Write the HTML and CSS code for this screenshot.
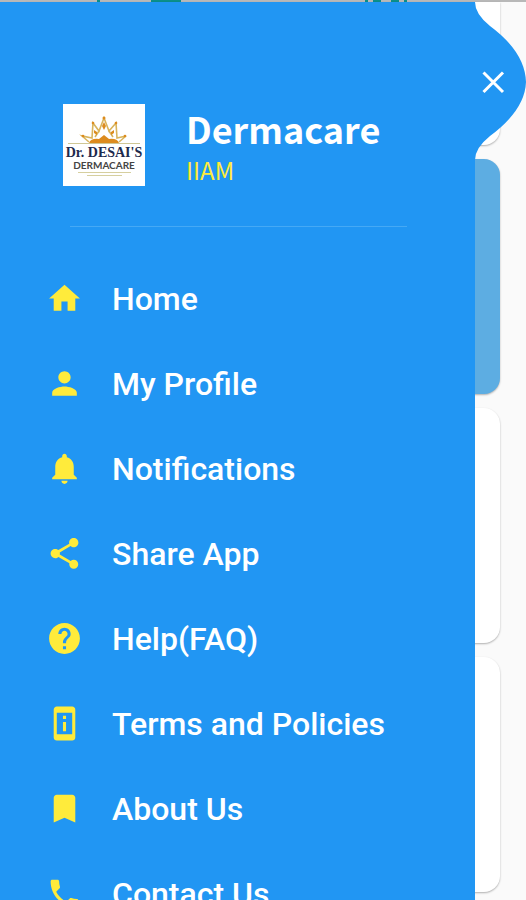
FILE: index.html
```
<!DOCTYPE html>
<html lang="en">
<head>
    <meta charset="UTF-8">
    <meta name="viewport" content="width=device-width, initial-scale=1.0">
    <title>Dermacare</title>
    <link rel="stylesheet" href="styles.css">
</head>
<body>
    <div class="topbar"></div>

    <main class="cards">
        <div class="card card-first"></div>
        <div class="card card-blue"></div>
        <div class="card"></div>
        <div class="card"></div>
    </main>

    <aside class="drawer">
        <div class="panel">
            <header class="profile">
                <svg class="logo" viewBox="0 0 82 82" role="img" aria-label="Dr. Desai's Dermacare">
                    <rect width="82" height="82" fill="#fff"/>
                    <g fill="none" stroke="#d9b45c" stroke-width="1.6">
                        <path d="M26 38 L19 32 L29 34 L30 19 L36 27 L41 14 L46 27 L53 19 L54 34 L63 32 L56 38"/>
                        <path d="M36 27 L32 33 M46 27 L50 33"/>
                    </g>
                    <path d="M26 39 Q28 34 36 35 L41 31 L46 35 Q54 34 56 39 Z" fill="#dc8b1e"/>
                    <g fill="#dc8b1e">
                        <path d="M41 18 L43 22 L41 26 L39 22 Z"/>
                        <path d="M31 26 L34 28 L34 31 L31 29 Z"/>
                        <path d="M51 26 L48 28 L48 31 L51 29 Z"/>
                        <circle cx="41" cy="14" r="1.5"/>
                        <circle cx="30" cy="19" r="1.3"/>
                        <circle cx="53" cy="19" r="1.3"/>
                        <circle cx="20" cy="32" r="1.3"/>
                        <circle cx="62" cy="32" r="1.3"/>
                    </g>
                    <path d="M5 39.5H77" stroke="#cfc795" stroke-width="1"/>
                    <text class="logo-name" x="41" y="53" text-anchor="middle">Dr. DESAI'S</text>
                    <text class="logo-sub" x="41" y="65" text-anchor="middle">DERMACARE</text>
                    <path d="M15 68.5H68M24 71.5H59" stroke="#d6cf9f" stroke-width="1"/>
                </svg>
                <div class="who">
                    <h1>Dermacare</h1>
                    <p>IIAM</p>
                </div>
            </header>
            <hr>
            <nav class="menu">
                <a href="#home">
                    <svg viewBox="0 0 24 24"><path d="M10 20v-6h4v6h5v-8h3L12 3 2 12h3v8z"/></svg>
                    Home
                </a>
                <a href="#profile">
                    <svg viewBox="0 0 24 24"><path d="M12 12c2.21 0 4-1.79 4-4s-1.79-4-4-4-4 1.79-4 4 1.79 4 4 4zm0 2c-2.67 0-8 1.34-8 4v2h16v-2c0-2.66-5.33-4-8-4z"/></svg>
                    My Profile
                </a>
                <a href="#notifications">
                    <svg viewBox="0 0 24 24"><path d="M12 22c1.1 0 2-.9 2-2h-4c0 1.1.89 2 2 2zm6-6v-5c0-3.07-1.64-5.64-4.5-6.32V4c0-.83-.67-1.5-1.5-1.5s-1.5.67-1.5 1.5v.68C7.63 5.36 6 7.92 6 11v5l-2 2v1h16v-1l-2-2z"/></svg>
                    Notifications
                </a>
                <a href="#share">
                    <svg viewBox="0 0 24 24"><path d="M18 16.08c-.76 0-1.44.3-1.96.77L8.91 12.7c.05-.23.09-.46.09-.7s-.04-.47-.09-.7l7.05-4.11c.54.5 1.25.81 2.04.81 1.66 0 3-1.34 3-3s-1.34-3-3-3-3 1.34-3 3c0 .24.04.47.09.7L8.04 9.81C7.5 9.31 6.79 9 6 9c-1.66 0-3 1.34-3 3s1.34 3 3 3c.79 0 1.5-.31 2.04-.81l7.12 4.16c-.05.21-.08.43-.08.65 0 1.61 1.31 2.92 2.92 2.92s2.92-1.31 2.92-2.92-1.31-2.92-2.92-2.92z"/></svg>
                    Share App
                </a>
                <a href="#help">
                    <svg viewBox="0 0 24 24"><path d="M12 2C6.48 2 2 6.48 2 12s4.48 10 10 10 10-4.48 10-10S17.52 2 12 2zm1 17h-2v-2h2v2zm2.07-7.75l-.9.92C13.45 12.9 13 13.5 13 15h-2v-.5c0-1.1.45-2.1 1.17-2.83l1.24-1.26c.37-.36.59-.86.59-1.41 0-1.1-.9-2-2-2s-2 .9-2 2H8c0-2.21 1.79-4 4-4s4 1.79 4 4c0 .88-.36 1.68-.93 2.25z"/></svg>
                    Help(FAQ)
                </a>
                <a href="#terms">
                    <svg viewBox="0 0 24 24"><path d="M13 7h-2v2h2V7zm0 4h-2v6h2v-6zm4-9.99L7 1c-1.1 0-2 .9-2 2v18c0 1.1.9 2 2 2h10c1.1 0 2-.9 2-2V3c0-1.1-.9-1.99-2-1.99zM17 19H7V5h10v14z"/></svg>
                    Terms and Policies
                </a>
                <a href="#about">
                    <svg viewBox="0 0 24 24"><path d="M17 3H7c-1.1 0-1.99.9-1.99 2L5 21l7-3 7 3V5c0-1.1-.9-2-2-2z"/></svg>
                    About Us
                </a>
                <a href="#contact">
                    <svg viewBox="0 0 24 24"><path d="M6.62 10.79c1.44 2.83 3.76 5.14 6.59 6.59l2.2-2.2c.27-.27.67-.36 1.02-.24 1.12.37 2.33.57 3.57.57.55 0 1 .45 1 1V20c0 .55-.45 1-1 1-9.39 0-17-7.61-17-17 0-.55.45-1 1-1h3.5c.55 0 1 .45 1 1 0 1.25.2 2.45.57 3.57.11.35.03.74-.25 1.02l-2.2 2.2z"/></svg>
                    Contact Us
                </a>
            </nav>
        </div>
        <button class="close" type="button" aria-label="Close menu">
            <svg viewBox="0 0 51 158">
                <path d="M0 0Q0 12 15 24Q50 50 51 80Q50 108 15 134Q0 146 0 158Z" fill="#2196f3"/>
                <path d="M8.500 70.500L28 90M28 70.500L8.500 90" stroke="#fff" stroke-width="3"/>
            </svg>
        </button>
    </aside>
</body>
</html>
```
FILE: styles.css
```
body {
    margin: 0;
    height: 100vh;
    overflow: hidden;
    position: relative;
    background-color: #fafafa;
    font-family: Roboto, "Liberation Sans", sans-serif;
}

/* Bottom edge of the app bar, title and tabs scrolled under it */
.topbar {
    height: 2px;
    background:
        linear-gradient(#0b8f8a, #0b8f8a) 97px 0 / 3px 2px no-repeat,
        linear-gradient(#0b8f8a, #0b8f8a) 151px 0 / 30px 2px no-repeat,
        linear-gradient(#0b8f8a, #0b8f8a) 365px 0 / 3px 2px no-repeat,
        linear-gradient(#0b8f8a, #0b8f8a) 373px 0 / 8px 2px no-repeat,
        linear-gradient(#0b8f8a, #0b8f8a) 391px 0 / 8px 2px no-repeat,
        linear-gradient(#0b8f8a, #0b8f8a) 404px 0 / 3px 2px no-repeat,
        #b8b8b8;
}

/* Cards behind the drawer */
.cards {
    display: flex;
    flex-direction: column;
    gap: 14px;
    padding: 0 26px;
}

.card {
    height: 235px;
    flex-shrink: 0;
    background-color: #fff;
    border-radius: 16px;
    box-shadow: 0 1px 2px rgba(0, 0, 0, 0.3);
}

.card-first {
    height: 143px;
    border-radius: 0 0 16px 16px;
}

.card-blue {
    background-color: #5dade2;
}

/* Drawer */
.drawer {
    position: absolute;
    top: 2px;
    right: 0;
    bottom: 0;
    left: 0;
    display: flex;
    align-items: flex-start;
}

.panel {
    flex: 1;
    height: 100%;
    box-sizing: border-box;
    overflow: hidden;
    padding-top: 101px;
    background-color: #2196f3;
}

.close {
    width: 51px;
    padding: 0;
    border: 0;
    background: none;
    cursor: pointer;
}

.close svg {
    display: block;
}

.profile {
    display: flex;
    align-items: center;
    gap: 41px;
    padding-left: 63px;
}

.logo {
    width: 82px;
    height: 82px;
}

.logo-name {
    font: bold 14px "Liberation Serif", serif;
    fill: #1d2a4d;
}

.logo-sub {
    font: bold 10px Lato, sans-serif;
    fill: #444;
}

.who {
    font-family: "Noto Sans CJK SC", sans-serif;
}

.who h1 {
    margin: 0;
    font-size: 36px;
    line-height: 50px;
    font-weight: bold;
    color: #fff;
}

.who p {
    margin: 0;
    font-size: 24px;
    line-height: 34px;
    font-weight: 400;
    color: #ffeb3b;
}

hr {
    height: 1px;
    margin: 39px 68px 29px 70px;
    border: 0;
    background-color: #45a9f5;
}

.menu a {
    display: flex;
    align-items: center;
    gap: 29px;
    height: 85px;
    padding-left: 46px;
    color: #fff;
    font-size: 32px;
    font-weight: 500;
    text-decoration: none;
}

.menu svg {
    width: 37px;
    height: 37px;
    fill: #ffeb3b;
}
```
